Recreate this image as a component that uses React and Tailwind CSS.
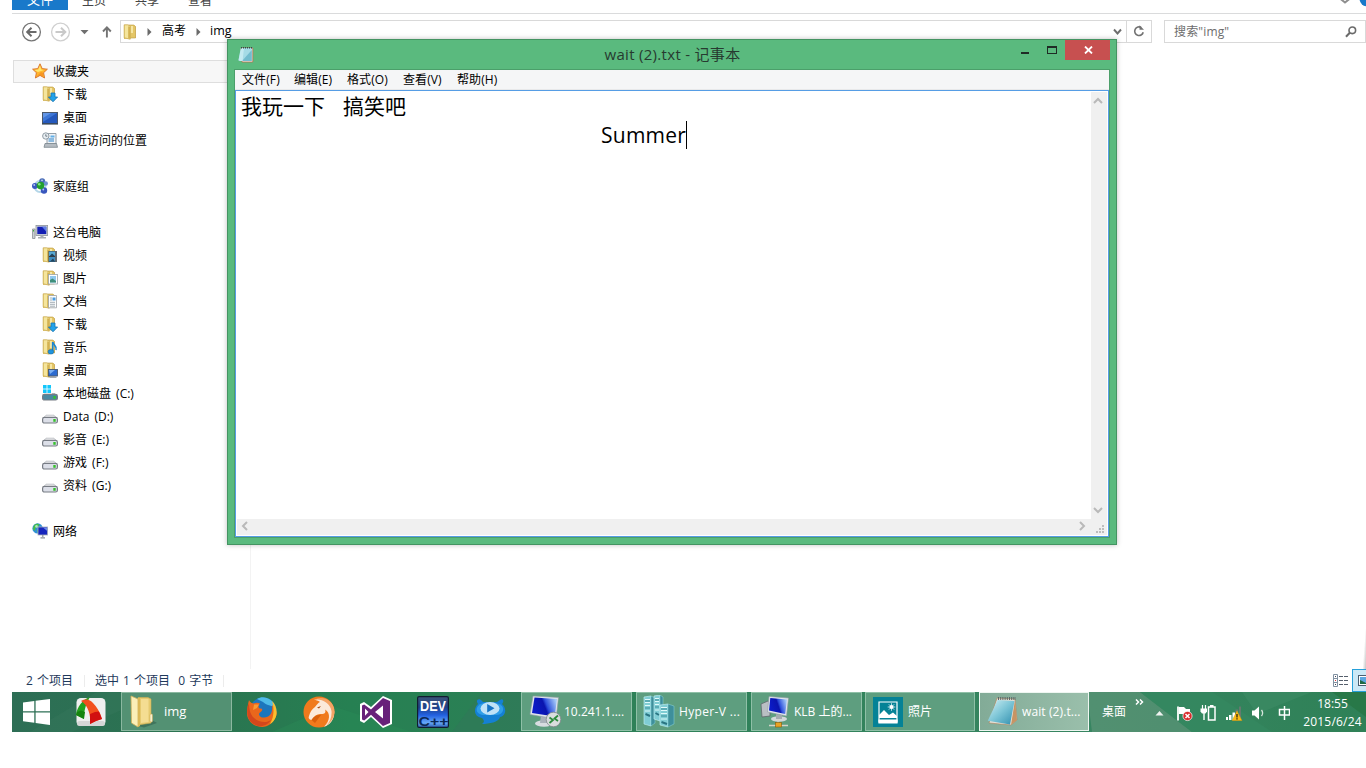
import React from "react";

/* ---------- small icons (16px) ---------- */
const Folder16 = ({ children }) => (
  <svg width="16" height="16" viewBox="0 0 16 16" className="shrink-0">
    <path d="M1 1 H11 L12.5 2.5 V14 H6 L1 15Z" fill="#dcbc58" />
    <path d="M5.5 1 H10.5 L12.5 2.5 V14 H5.5Z" fill="#e4c666" stroke="#bd9a42" strokeWidth=".6" />
    <path d="M7.5 2 H10 V9 H7.5Z" fill="#f6e6a4" />
    <path d="M1.2 .8 H4.8 L7.2 2 V15.2 L1.2 13.8Z" fill="#f5e59c" stroke="#c9a950" strokeWidth=".8" />
    <path d="M5.2 2.2 L7.3 3 V15 L5.2 14.4Z" fill="#d4b251" />
    {children}
  </svg>
);
const DownFolder = () => (
  <Folder16>
    <path d="M9 7 H13 V11 H15.6 L11 15.8 L6.4 11 H9Z" fill="#22a2ea" stroke="#1474b4" strokeWidth=".8" />
  </Folder16>
);
const VideoFolder = () => (
  <Folder16>
    <rect x="6.5" y="4" width="8.5" height="11" fill="#333e48" />
    <rect x="7" y="4.5" width="6" height="4.5" fill="#58aad5" />
    <rect x="7" y="10" width="6" height="4.5" fill="#3f8dc0" />
    <path d="M7.5 9 L10 6.5 L13 9Z M8 14.5 L11 11.5 L13 14.5Z" fill="#20455f" />
    <path d="M14 4.5 V15" stroke="#dfe5e8" strokeDasharray="1 1" />
  </Folder16>
);
const PicFolder = () => (
  <Folder16>
    <rect x="6.5" y="4.5" width="9" height="9.5" fill="#fff" stroke="#9aa3aa" strokeWidth=".8" />
    <rect x="8" y="6" width="6" height="6.5" fill="#8fc8ee" />
    <path d="M8 12.5 V10 L10.5 8.5 L14 11 V12.5Z" fill="#3f8f7a" />
  </Folder16>
);
const DocFolder = () => (
  <Folder16>
    <path d="M6.5 2.5 H14.5 V14.8 H6.5Z" fill="#fcfdfd" stroke="#9aa0a5" strokeWidth=".8" />
    <path d="M8 5 H10 M8 7 H10 M8 9.3 H13 M8 11.3 H13 M8 13.2 H13" stroke="#8d99a2" strokeWidth=".8" />
    <rect x="10.5" y="4.5" width="3" height="3" fill="#4a9be0" />
  </Folder16>
);
const MusicFolder = () => (
  <Folder16>
    <path d="M10.7 3 C11 6 15.2 6.5 14 11" fill="none" stroke="#1a86cf" strokeWidth="1.6" />
    <path d="M10.7 3 V12.6" stroke="#1a86cf" strokeWidth="1.6" />
    <ellipse cx="8.9" cy="12.8" rx="2.8" ry="2.3" fill="#2094dd" stroke="#12639c" strokeWidth=".5" />
  </Folder16>
);
const DeskFolder = () => (
  <Folder16>
    <rect x="6.5" y="7.5" width="9" height="6.5" fill="#2c6bd0" stroke="#4b5a70" strokeWidth=".9" />
    <path d="M7 8 H13 L8 12Z" fill="#7db1f2" />
    <path d="M7.5 15.2 H14.5" stroke="#7b858d" />
  </Folder16>
);
const Star = () => (
  <svg width="16" height="16" viewBox="0 0 16 16" className="shrink-0">
    <path d="M8 .8 L10.2 5.6 L15.4 6.2 L11.6 9.7 L12.6 15 L8 12.4 L3.4 15 L4.4 9.7 L.6 6.2 L5.8 5.6Z" fill="#ffb52c" stroke="#d8702a" strokeWidth=".9" />
    <path d="M8 2.6 L9.2 6.4 L12 7 L6 9 L2.4 6.9 L6.2 6.4Z" fill="#ffe66e" />
    <path d="M11 14 L8 12 L5 13 L9 9 L11 10Z" fill="#f58a1e" opacity=".7" />
  </svg>
);
const Desk = () => (
  <svg width="16" height="16" viewBox="0 0 16 16" className="shrink-0">
    <rect x=".5" y="3.5" width="15" height="11" fill="#2458bc" stroke="#4a576a" />
    <path d="M1 4 H15 L1 13Z" fill="#3d76d6" />
    <path d="M1 4 H9 L1 9Z" fill="#6b9eea" opacity=".8" />
    <path d="M0 14.8 H16" stroke="#3b4a5c" strokeWidth="1.6" />
  </svg>
);
const Recent = () => (
  <svg width="16" height="16" viewBox="0 0 16 16" className="shrink-0">
    <path d="M5 1.5 H14 V12 H5Z" fill="#f0f3f6" stroke="#8a959e" strokeWidth=".9" />
    <path d="M6.5 7 H12 M6.5 9 H12" stroke="#2d83c9" />
    <rect x="8.5" y="3.5" width="4" height="2" fill="#62b0e8" />
    <path d="M3 11.5 H14.5 L15.5 15.3 H2Z" fill="#b5bcc2" stroke="#7a858d" strokeWidth=".8" />
    <circle cx="3.8" cy="4" r="3.2" fill="#e8eef2" stroke="#87939c" strokeWidth=".9" />
    <path d="M3.8 2.3 V4.2 H5.3" stroke="#55656f" strokeWidth=".8" fill="none" />
  </svg>
);
const HomeGroup = () => (
  <svg width="16" height="16" viewBox="0 0 16 16" className="shrink-0">
    <circle cx="8" cy="8.5" r="5.5" fill="none" stroke="#b4d6e8" strokeWidth="2" />
    <circle cx="2.9" cy="8" r="2.9" fill="#3a59c0" />
    <circle cx="10.2" cy="3.2" r="3" fill="#4a6db8" />
    <circle cx="13.8" cy="5.5" r="2.2" fill="#6f92cf" />
    <circle cx="12" cy="12.5" r="3.2" fill="#3856bd" />
    <circle cx="8.5" cy="7.6" r="3.8" fill="#22a02c" />
    <circle cx="7.3" cy="6.3" r="1.3" fill="#8be38c" />
    <circle cx="2.2" cy="7" r=".9" fill="#b7c6f1" />
    <circle cx="11.3" cy="11.5" r=".9" fill="#b7c6f1" />
    <circle cx="10" cy="2.4" r=".8" fill="#cddff2" />
  </svg>
);
const PC = () => (
  <svg width="16" height="16" viewBox="0 0 16 16" className="shrink-0">
    <path d="M.5 5 H3 V14.5 H.5Z" fill="#c9ced2" stroke="#8a9096" strokeWidth=".8" />
    <rect x="1" y="6" width="1" height="1.5" fill="#3fae3a" />
    <rect x="4" y="1.5" width="11.7" height="10" fill="#d4d8db" stroke="#8b9298" strokeWidth=".8" />
    <rect x="5.3" y="2.7" width="9" height="7.4" fill="#1420b4" />
    <path d="M10 2.7 H14.3 V7.7Z" fill="#5f7fe6" />
    <path d="M8.5 11.5 H11.5 V13 H14 V14.6 H6 V13 H8.5Z" fill="#a9afb4" />
  </svg>
);
const Drive = ({ win }) => (
  <svg width="16" height="16" viewBox="0 0 16 16" className="shrink-0">
    {win ? (
      <g>
        <g fill="#12c6fb">
          <rect x="1" y="0" width="3.6" height="3.6" />
          <rect x="5.4" y="0" width="3.6" height="3.6" />
          <rect x="1" y="4.4" width="3.6" height="3.6" />
          <rect x="5.4" y="4.4" width="3.6" height="3.6" />
        </g>
        <path d="M10 8.5 H13" stroke="#b6bbc0" />
      </g>
    ) : (
      <path d="M1.5 10 L4 7.2 H12 L14.5 10Z" fill="#f4f5f6" stroke="#b4b8bd" strokeWidth=".8" />
    )}
    <rect x=".6" y="9.4" width="14.8" height="5.6" rx="1.8" fill={win ? "#4b88a0" : "#dcdfe8"} stroke="#777c84" strokeWidth="1.2" />
    <rect x="11.3" y="11" width="2.4" height="2.8" fill="#35c12c" />
  </svg>
);
const Net = () => (
  <svg width="16" height="16" viewBox="0 0 16 16" className="shrink-0">
    <circle cx="5.6" cy="5.4" r="5.2" fill="#2f8fd6" />
    <path d="M2 2.3 C4 .6 6 .4 7.5 1.3 L6 4 L3.5 5 L3 8 L.8 6Z M5 7 L8 8 L6 10.3Z" fill="#45bd4b" />
    <circle cx="4.5" cy="3.4" r="1.3" fill="#c9f0d8" opacity=".8" />
    <rect x="6" y="4" width="9.6" height="8" fill="#1726bd" stroke="#aab1b8" strokeWidth=".8" />
    <path d="M11 4.4 H15.2 V8Z" fill="#6c8bea" />
    <path d="M10.8 12 V14 M8.5 14.8 H13" stroke="#8b9298" strokeWidth="1.2" />
  </svg>
);
const NotepadSmall = () => (
  <svg width="16" height="17" viewBox="0 0 16 17">
    <path d="M3 2 L14.8 2 V16 H4Z" fill="#f2efe9" stroke="#b2714f" strokeWidth=".8" />
    <path d="M2.8 2 H13.8 V15 H2 L.4 14.4Z" fill="#a5dbe6" />
    <path d="M13.8 4 V15 H4Z" fill="#62b2c6" opacity=".75" />
    <path d="M3 2 H6 L4.6 15 H2 L.6 14Z" fill="#cdeef4" opacity=".8" />
    <path d="M3 1.7 H14" stroke="#33474d" strokeWidth="1.6" strokeDasharray="1 1" />
  </svg>
);

/* ---------- task bar icons ---------- */
const Firefox = () => (
  <svg width="32" height="32" viewBox="0 0 32 32">
    <circle cx="17" cy="15" r="13.5" fill="#1d76bd" />
    <path d="M11 3 C17 -1 27 2 29 11 C26 10 20 9 17 6Z" fill="#4fbbe8" />
    <path d="M3 4 C4 6.5 6 7.5 8 7.5 C10 6.5 12 6.5 14 7.5 C12 9.5 12 11.5 14 12.5 C17 12.5 17 14.5 14 16.5 C12 17.5 13 21 17 21.5 C24 22 27 17 26 9 C30 13 31 16 30.5 19 C28 27 22 31 16 31 C8 31 1 25 1 17 C1 12 2 8 3 4Z" fill="#e9671c" />
    <path d="M26 5 C32.5 11 32.5 23 24 28 C28 21 28.5 13 26 5Z" fill="#fbc02e" />
    <path d="M3 7 C3 15 5 22 13 25 C18 27 22 26 25 24 C22 29 16 31 12 30 C5 28 1.5 23 1.3 17 C1 12 2 9 3 7Z" fill="#d4471c" />
    <path d="M8 8.5 L13 8.5 L11 12 L7 14Z" fill="#f79a34" />
  </svg>
);
const Cheetah = () => (
  <svg width="32" height="32" viewBox="0 0 32 32">
    <circle cx="16" cy="16" r="15.5" fill="#f07a1d" />
    <path d="M11 4 C20 .5 30 4 31.3 16 C31 24 27 29 21 30.8 C27 25 28 17 22 13.5 C23.5 17 21 18.5 17 18 C14 18 11 20 8.5 24 C6 23.5 5 22 6 20 C7 16 9 13 12 11 C14 8.5 15 7 17 6 C15 4.5 13 4 11 4Z" fill="#fbe9da" />
    <path d="M11 4 C17 2 27 6 28.5 15 C29 21 27 26 23 29.5 C32 24 34 13 28 6.5 C23 1 16 1 11 4Z" fill="#f5a365" />
    <path d="M14 11.5 L18 10 L16 12.5Z" fill="#a64b13" />
    <path d="M8.5 24 C11 20 14 18.5 18 19 L12 27Z" fill="#d95f0c" />
  </svg>
);
const VS = () => (
  <svg width="32" height="32" viewBox="0 0 32 32">
    <path d="M23 0 L32 4 V28 L23 32 L11 21 L4 27 L0 25 V8 L4 6 L11 11Z" fill="#fff" />
    <path d="M23 2 L30 5 V27 L23 30 L11 18.8 L4.2 24.5 L2 23.5 V9.5 L4.2 8.5 L11 13.5Z" fill="#68217a" />
    <path d="M5 12.5 L8.5 16 L5 19.8Z M23 9.5 V22.5 L15 16Z" fill="#fff" />
  </svg>
);
const DevCpp = () => (
  <svg width="32" height="32" viewBox="0 0 32 32">
    <defs>
      <linearGradient id="dev" x1="0" y1="0" x2="0" y2="1">
        <stop offset="0" stopColor="#3c5478" />
        <stop offset=".35" stopColor="#1f4288" />
        <stop offset=".6" stopColor="#2260e0" />
        <stop offset=".85" stopColor="#65a8f8" />
        <stop offset="1" stopColor="#2b5db0" />
      </linearGradient>
    </defs>
    <rect x=".6" y=".6" width="30.8" height="30.8" rx="1.5" fill="url(#dev)" stroke="#101c30" strokeWidth="1.2" />
    <text x="16" y="15" textAnchor="middle" textLength="26" lengthAdjust="spacingAndGlyphs" fontFamily="Liberation Sans, sans-serif" fontWeight="700" fontSize="14" fill="#fff">DEV</text>
    <text x="16.5" y="29.5" textAnchor="middle" textLength="30" lengthAdjust="spacingAndGlyphs" fontFamily="Liberation Sans, sans-serif" fontWeight="700" fontSize="12.5" fill="#0b2856">C++</text>
  </svg>
);
const Player = () => (
  <svg width="32" height="32" viewBox="0 0 32 32">
    <path d="M4 8 C1 4 5 2 7 4 L9 6 H23 L26 4 C28 2 31 4 28 8 C33 12 32 20 26 21 C25 26 15 28 8 28 C11 26 10 24 8 22 C0 21 -1 13 4 8Z" fill="#1480d4" />
    <path d="M4 10 C9 5 22 5 28 10 C31 14 28 19 22 19 H9 C3 18 1 14 4 10Z" fill="#2f9ee8" />
    <ellipse cx="16" cy="12.5" rx="9.5" ry="6.5" fill="#bfe2f7" />
    <path d="M13.2 8 L20.5 12.3 L13.2 16.5Z" fill="#1574c4" />
  </svg>
);
const Monitor = ({ remote }) => (
  <svg width="33" height="33" viewBox="0 0 33 33" className="shrink-0">
    <defs>
      <linearGradient id={remote ? "scrA" : "scrB"} x1="0" y1=".6" x2="1" y2=".3">
        <stop offset="0" stopColor="#0b1ccc" />
        <stop offset=".5" stopColor="#0a14ae" />
        <stop offset=".6" stopColor="#2d4fdc" />
        <stop offset="1" stopColor="#a8cdf8" />
      </linearGradient>
    </defs>
    {remote ? (
      <g>
        <ellipse cx="15" cy="28.5" rx="9" ry="3.3" fill="#d8dce0" />
        <path d="M12 20 L19 22 L18 28 H11Z" fill="#aab2ba" />
        <path d="M4 1 L29.5 2.5 L27 24 L1 19.5Z" fill="#dfe5ea" stroke="#8e9aa5" strokeWidth=".6" />
        <path d="M5.5 2.5 L28 4 L25.7 21.5 L3 18Z" fill="url(#scrA)" />
        <circle cx="24.5" cy="24.5" r="7.3" fill="#d9dddd" stroke="#7f8789" strokeWidth=".8" />
        <path d="M20.5 22.5 L24 25 L20.5 28 M29 20.5 L25.5 23.5 L29 26" fill="none" stroke="#2b8a3c" strokeWidth="1.8" />
      </g>
    ) : (
      <g>
        <path d="M1 9 L8 6 L10 7 V21 L2 22Z" fill="#b9bfc3" stroke="#5f676c" strokeWidth=".8" />
        <ellipse cx="19" cy="24" rx="8" ry="2.7" fill="#d3d7da" />
        <path d="M16 19 L22 20 V24 H16Z" fill="#a4abb0" />
        <path d="M9 1.5 L28.5 3 L26.5 21 L7.5 17Z" fill="#dfe5ea" stroke="#8e9aa5" strokeWidth=".6" />
        <path d="M10.3 3 L27 4.4 L25.2 19 L9 15.5Z" fill="url(#scrB)" />
        <path d="M18 24 V28 M9 30.5 H28" stroke="#d4d4c8" strokeWidth="1.3" />
        <rect x="15.5" y="27.5" width="6" height="4.5" fill="#e8a222" stroke="#8a5a0a" strokeWidth=".6" />
      </g>
    )}
  </svg>
);
const HyperV = () => (
  <svg width="32" height="33" viewBox="0 0 32 33" className="shrink-0">
    {[[1, 1, 30, 7, 4], [11, 0, 26, 6, 3], [17, 9, 23, 8, 6]].map(([x, y, h, a, b]) => (
      <g key={x}>
        <path d={`M${x} ${y + 1} L${x + a} ${y} L${x + a} ${y + h} L${x} ${y + h - 2}Z`} fill="#7fcdd4" stroke="#b9eaec" strokeWidth=".7" />
        <path d={`M${x + a} ${y} L${x + a + b} ${y + 2} V${y + h - 3} L${x + a} ${y + h}Z`} fill="#3e8f9b" stroke="#8fd7dc" strokeWidth=".5" />
        <path d={`M${x + 1} ${y + 3.5} H${x + a - 1} M${x + 1} ${y + 6.5} H${x + a - 1} M${x + 1} ${y + 9.5} H${x + a - 1} M${x + 1} ${y + 15} H${x + a - 1}`} stroke="#dffafa" strokeWidth="1" />
        <path d={`M${x + 1} ${y + 5} H${x + a - 1} M${x + 1} ${y + 12} H${x + a - 1}`} stroke="#3b8d98" strokeWidth="1" />
        <path d={`M${x + 1.5} ${y + 18} L${x + a - 1} ${y + 20}`} stroke="#2a7482" strokeWidth="2" />
      </g>
    ))}
  </svg>
);
const Photos = () => (
  <svg width="30" height="30" viewBox="0 0 30 30" className="shrink-0">
    <rect width="30" height="30" fill="#058296" />
    <path d="M6 5 H24 V25 H6Z" fill="#058296" stroke="#fff" strokeWidth="1.2" />
    <path d="M6 21 V18 L11 13 L16 18 L20 15.5 L24 19 V21Z" fill="#fff" />
    <circle cx="18.5" cy="10" r="2" fill="#fff" />
    <path d="M18.5 6.2 V13.8 M14.7 10 H22.3 M15.8 7.3 L21.2 12.7 M21.2 7.3 L15.8 12.7" stroke="#fff" strokeWidth=".7" />
    <rect x="5.4" y="22.5" width="19.2" height="4" fill="#fff" />
  </svg>
);
const NotepadBig = () => (
  <svg width="32" height="32" viewBox="0 0 32 32" className="shrink-0">
    <path d="M10 2 L28 3 L30 24 L24 29 L2 27Z" fill="#e5e0d5" stroke="#a9825c" strokeWidth=".6" />
    <path d="M28 4 L30 24 L24 29Z" fill="#c79463" />
    <defs>
      <linearGradient id="pad" x1="0" y1="0" x2="1" y2="1">
        <stop offset="0" stopColor="#d4f1f5" />
        <stop offset=".5" stopColor="#7cc5d6" />
        <stop offset="1" stopColor="#2f8eae" />
      </linearGradient>
    </defs>
    <path d="M10.5 4 L27.5 5 L23 28.5 L.8 24.8Z" fill="url(#pad)" />
    <path d="M11 2.5 H29" stroke="#5b6668" strokeWidth="3" strokeDasharray="1 1.2" />
  </svg>
);
const FolderBig = () => (
  <svg width="30" height="33" viewBox="0 0 30 33" className="shrink-0">
    <path d="M20 24 L27 28 L14 32.5 L8 31Z" fill="#24493a" opacity=".4" />
    <path d="M8 2.5 H18 L21 4 V28 L8 30Z" fill="#e6ca70" stroke="#cfae52" strokeWidth=".6" />
    <path d="M11 4 H18.5 V27 L11 28Z" fill="#f4dd92" />
    <path d="M1 1 L8 4 V32 L1.5 28Z" fill="#fbefb8" stroke="#d2b15a" strokeWidth=".8" />
    <path d="M8 4 L10 3 V31 L8 32Z" fill="#dcb957" />
    <rect x="20" y="19" width="2.5" height="8" rx="1" fill="#f6f0cf" stroke="#c9a74e" strokeWidth=".5" />
  </svg>
);
const Umbrella = () => (
  <svg width="30" height="30" viewBox="0 0 30 30">
    <rect x=".5" y="1" width="29" height="28" rx="4.5" fill="#efefef" />
    <rect x="1" y="24" width="28" height="5" rx="2.5" fill="#d5d6d6" />
    <path d="M14 0 C7 2 1 10 0 18 L4 20 L8 22 C8 15 9 8 14 0Z" fill="#23a11f" />
    <path d="M1 15 L5 13.5 L9 15 L8 22 L4 20 L0 18Z" fill="#15840f" />
    <path d="M5 4 C10 1.5 14 2.5 17 6 C21 10 24 15 26 22 L20 24 L14 27 C15 18 12 8 5 4Z" fill="#f2501d" />
    <path d="M14 17 L19 15 L23 14.5 L26 22 L20 24 L14 27Z" fill="#d11010" />
  </svg>
);

/* ---------- data ---------- */
const NAV = [
  ["收藏夹", Star, 0], ["下载", DownFolder, 1], ["桌面", Desk, 1], ["最近访问的位置", Recent, 1], null,
  ["家庭组", HomeGroup, 0], null,
  ["这台电脑", PC, 0], ["视频", VideoFolder, 1], ["图片", PicFolder, 1], ["文档", DocFolder, 1],
  ["下载", DownFolder, 1], ["音乐", MusicFolder, 1], ["桌面", DeskFolder, 1],
  ["本地磁盘 (C:)", () => <Drive win />, 1], ["Data (D:)", Drive, 1], ["影音 (E:)", Drive, 1],
  ["游戏 (F:)", Drive, 1], ["资料 (G:)", Drive, 1], null, ["网络", Net, 0],
];

const TABS = ["主页", "共享", "查看"];

const Crumb = () => (
  <svg width="5" height="8" viewBox="0 0 5 8" className="shrink-0"><path d="M.5 0 L4.5 4 L.5 8Z" fill="#6a6a6a" /></svg>
);

function Explorer() {
  return (
    <div className="flex h-[692px] flex-col pl-3">
      <div className="flex h-[14px] shrink-0 justify-between overflow-hidden border-b border-[#dadbdc] text-[12px] text-[#444]">
        <div className="flex h-[10px]">
          <div className="flex h-[10px] w-14 items-end justify-center bg-[#1979ca] text-[13px] text-white"><span className="h-[21px] leading-[20px]">文件</span></div>
          {TABS.map((t) => (
            <div key={t} className="flex h-[10px] w-[53px] items-end justify-center pr-px"><span className="h-[19px] leading-[20px]">{t}</span></div>
          ))}
        </div>
        <svg width="30" height="10" viewBox="0 0 30 10">
          <path d="M4 -1.5 L9 2.5 L14 -1.5" fill="none" stroke="#8e8e8e" strokeWidth="2" />
          <circle cx="31.5" cy="-1.5" r="8" fill="#1979ca" />
        </svg>
      </div>
      <div className="mt-[6px] flex h-[23px] shrink-0 items-center">
        <svg width="108" height="23" viewBox="0 0 108 23" className="shrink-0" fill="none">
          <circle cx="19.5" cy="12" r="8.9" stroke="#757575" strokeWidth="1.3" />
          <path d="M24.5 12 H15.5 M19.5 7.8 L15.2 12 L19.5 16.2" stroke="#6a6a6a" strokeWidth="2" />
          <circle cx="48.5" cy="12" r="8.9" stroke="#cfcfcf" strokeWidth="1.3" />
          <path d="M43.5 12 H53 M49 7.8 L53.3 12 L49 16.2" stroke="#c9c9c9" strokeWidth="2" />
          <path d="M68.5 10 H76.5 L72.5 14.2Z" fill="#6f6f6f" />
          <path d="M94.9 17.5 V8 M91 11.5 L94.9 7.3 L98.8 11.5" stroke="#747474" strokeWidth="1.9" />
        </svg>
        <div className="flex h-[23px] w-[1032px] items-center border border-[#d9d9d9]">
          <div className="flex h-full w-[1005px] items-center pl-[2px] text-[12px] text-black">
            <Folder16 />
            <span className="ml-[8px]"><Crumb /></span>
            <span className="mb-px ml-[10px] w-[25px]">高考</span>
            <span className="ml-[9px]"><Crumb /></span>
            <span className="mb-px ml-[9px] text-[12.5px]">img</span>
            <svg className="mr-[4px] ml-auto" width="9" height="8" viewBox="0 0 9 8"><path d="M1 1.5 L4.5 5.5 L8 1.5" fill="none" stroke="#6d6d6d" strokeWidth="1.9" /></svg>
          </div>
          <div className="flex h-full flex-1 items-center justify-center border-l border-[#d9d9d9]">
            <svg width="12" height="13" viewBox="0 0 12 13" fill="none"><path d="M8.3 2.6 A4.3 4.3 0 1 0 10.2 7.2" stroke="#727272" strokeWidth="1.6" /><path d="M5.5 0 V4.6 H10Z" transform="translate(1 .2)" fill="#727272" /></svg>
          </div>
        </div>
        <div className="ml-3 flex h-[23px] w-[202px] items-center justify-between border border-[#d9d9d9] pr-2 pl-[9px] text-[12px] text-[#6d6d6d]">
          <span className="tracking-[.15px]">搜索"img"</span>
          <svg width="12" height="12" viewBox="0 0 12 12" fill="none"><circle cx="7.3" cy="4.3" r="3.3" stroke="#6a6a6a" strokeWidth="1.6" /><path d="M4.8 6.8 L1 10.8" stroke="#6a6a6a" strokeWidth="2" /></svg>
        </div>
      </div>
      <div className="mt-[17px] flex flex-1">
        <div className="w-[239px] border-r border-[#f3f3f3]">
          {NAV.map((item, i) => {
            if (!item) return <div key={i} className="h-[23px]" />;
            const [label, Icon, depth] = item;
            return (
              <div key={i} className={"flex h-[23px] items-center text-[12px] text-black " + (i === 0 ? "ml-px border border-[#dedede] bg-[#f7f7f7] pl-[18px]" : depth ? "pl-[30px]" : "pl-5")}>
                <span className="pb-px"><Icon /></span>
                <span className="ml-[5px] leading-[22px] whitespace-pre [word-spacing:2px]">{label}</span>
              </div>
            );
          })}
        </div>
        <div className="flex flex-1 items-end justify-end">
          <div className="h-10 w-[3px] bg-linear-to-br from-white from-40% to-[#c4c4c4]" />
        </div>
      </div>
      <div className="flex h-[23px] shrink-0 items-center text-[12px] text-[#1e395b]">
        <span className="ml-[14px] w-[58px] pt-px whitespace-pre [word-spacing:1px]">2 个项目</span>
        <span className="h-3 w-px bg-[#ececec]" />
        <span className="ml-[10px] w-[128px] pt-px whitespace-pre [word-spacing:1px]">选中 1 个项目  0 字节</span>
        <span className="h-3 w-px bg-[#ececec]" />
        <svg className="ml-auto" width="16" height="13" viewBox="0 0 16 13" fill="none">
          <path d="M.5 .5 H4.5 V12.5 H.5Z M.5 4.5 H4.5 M.5 8.5 H4.5" stroke="#8292a2" />
          <path d="M2 2.5 H3 M2 10.5 H3" stroke="#445" /><path d="M2 6.5 H3" stroke="#d33" />
          <path d="M6 2.5 H10 M11 2.5 H15 M6 6.5 H10 M11 6.5 H15 M6 10.5 H10 M11 10.5 H15" stroke="#555f6b" />
        </svg>
        <div className="ml-[3px] flex h-[23px] w-[14px] items-center overflow-hidden border border-r-0 border-[#26a0da] bg-[#cbe8f6] pl-[5px]">
          <svg width="12" height="11" viewBox="0 0 12 11" className="shrink-0"><rect x=".5" y=".5" width="14" height="10" fill="#fff" stroke="#4a5d70" /><rect x="2" y="2" width="10" height="7" fill="#5ca6e0" /><path d="M2 9 V5 L8 8 V9Z" fill="#1f6a44" /></svg>
        </div>
      </div>
    </div>
  );
}

const MENU = [["文件(F)", "w-[52px]"], ["编辑(E)", "w-[53px]"], ["格式(O)", "w-[56px]"], ["查看(V)", "w-[54px]"], ["帮助(H)", "w-[60px]"]];

function Chevron({ d }) {
  return <svg width="10" height="10" viewBox="0 0 10 10"><path d={d} fill="none" stroke="#b9b9b9" strokeWidth="2" /></svg>;
}

function Notepad() {
  return (
    <div className="absolute top-[39px] left-[227px] flex h-[506px] w-[890px] flex-col border border-[#449462] bg-[#5aba7e] px-[6px] pb-[6px] shadow-[0_0_5px_rgba(0,0,0,0.25)]">
      <div className="flex h-[29px] shrink-0 items-start">
        <div className="w-[135px] pt-[6px] pl-1"><NotepadSmall /></div>
        <div className="flex-1 pr-[44px] text-center text-[15px] leading-[29px] tracking-[.3px] text-[#273a30]">wait (2).txt - 记事本</div>
        <svg width="45" height="20" viewBox="0 0 45 20"><path d="M1 13 H9" stroke="#1f2b25" strokeWidth="2" /><path d="M27.5 6 V14 M36.5 6 V14 M27 13.5 H37" stroke="#1f2b25" /><path d="M27 7 H37" stroke="#1f2b25" strokeWidth="2" /></svg>
        <div className="flex h-5 w-[45px] items-center justify-center bg-[#c75050] pl-px">
          <svg width="9" height="8" viewBox="0 0 9 8"><path d="M1 .5 L8 7.5 M8 .5 L1 7.5" stroke="#fff" strokeWidth="1.8" /></svg>
        </div>
      </div>
      <div className="flex flex-1 flex-col border border-[#4b9f6a]">
        <div className="flex h-5 shrink-0 items-center border-b border-[#e8e9ea] bg-[#f5f6f7] pl-[7px] text-[12px] text-black">
          {MENU.map(([m, w]) => <span key={m} className={"leading-[19px] tracking-[.1px] " + w}>{m}</span>)}
        </div>
        <div className="flex flex-1 flex-col border border-[#569de5] bg-white p-px">
          <div className="flex flex-1">
            <div className="flex-1 pt-px pl-1 text-[21px] leading-[28px] text-black">
              <div className="flex h-7"><span className="w-[102px] leading-[27px]">我玩一下</span><span className="leading-[27px]">搞笑吧</span></div>
              <div className="flex h-7 pl-[360px]"><span className="w-[85px] tracking-[.25px]">Summer</span><span className="h-7 w-px bg-black" /></div>
            </div>
            <div className="flex w-4 flex-col items-center justify-between bg-[#f0f0f0] pt-1 pr-[2px] pb-1">
              <Chevron d="M1 7 L5 3 L9 7" /><Chevron d="M1 3 L5 7 L9 3" />
            </div>
          </div>
          <div className="flex h-4 shrink-0 items-center bg-[#f0f0f0] pb-[2px] pl-[3px]">
            <Chevron d="M7 1 L3 5 L7 9" />
            <span className="ml-auto"><Chevron d="M3 1 L7 5 L3 9" /></span>
            <svg width="16" height="16" viewBox="0 0 16 16" className="ml-1" fill="#bdbdbd">
              <path d="M11 7h2v2h-2z M8 10h2v2h-2z M11 10h2v2h-2z M5 13h2v2h-2z M8 13h2v2h-2z M11 13h2v2h-2z" />
            </svg>
          </div>
        </div>
      </div>
    </div>
  );
}

const RUNNING = [
  ["10.241.1....", () => <Monitor remote />, "w-[111px] mr-1", "pl-[7px] gap-[2px]"],
  ["Hyper-V ...", HyperV, "w-[111px] mr-1 tracking-[.35px]", "pl-[6px] gap-1"],
  ["KLB 上的...", () => <Monitor />, "w-[111px] mr-[3px]", "pl-2 gap-[1px]"],
  ["照片", Photos, "w-[110px] mr-1", "pl-[7px] gap-[5px]"],
];

function Taskbar() {
  return (
    <div className="ml-3 grid h-10 grid-cols-1 grid-rows-1 overflow-hidden">
      <svg width="1354" height="40" viewBox="0 0 1354 40" className="col-start-1 row-start-1">
        <defs>
          <linearGradient id="bar" x1="0" y1="0" x2="1" y2="0">
            <stop offset="0" stopColor="#2d6e55" /><stop offset=".15" stopColor="#2a7450" />
            <stop offset=".25" stopColor="#268052" /><stop offset=".38" stopColor="#2c8056" />
            <stop offset=".8" stopColor="#378561" /><stop offset="1" stopColor="#2f8157" />
          </linearGradient>
        </defs>
        <rect width="1354" height="40" fill="url(#bar)" />
        <path d="M18 40 L85 0 H150 L60 40Z" fill="#3b7a60" opacity=".3" />
        <path d="M260 40 L320 14 L400 40Z" fill="#2b8b58" opacity=".4" />
        <path d="M440 40 L470 0 H520 V40Z" fill="#31765a" opacity=".5" />
        <path d="M1075 0 H1128 L1180 40 H1080Z" fill="#5c9478" opacity=".7" />
        <path d="M1128 0 L1180 40 H1260 L1200 0Z" fill="#348860" opacity=".8" />
        <path d="M1230 0 H1300 L1245 22Z" fill="#44906c" opacity=".4" />
        <path d="M1320 0 H1354 V25Z" fill="#287848" />
      </svg>
      <div className="col-start-1 row-start-1 flex h-10 items-center text-[13px] text-white">
        <div className="flex w-[49px] justify-center">
          <svg width="28" height="26" viewBox="0 0 28 26" fill="#fff"><path d="M0 3.6 L11.3 2 V12.2 H0Z M12.6 1.8 L27 0 V12.2 H12.6Z M0 13.4 H11.3 V23.8 L0 22.2Z M12.6 13.4 H27 V26 L12.6 24Z" /></svg>
        </div>
        <div className="flex w-[60px] justify-center pr-px"><Umbrella /></div>
        <div className="flex h-[39px] w-[111px] items-center self-start border border-[#8bb8a0] bg-[#539173] pl-2">
          <FolderBig /><span className="ml-[4px]">img</span>
        </div>
        <div className="ml-px flex w-[285px]">
          {[Firefox, Cheetah, VS, DevCpp, Player].map((I, i) => <div key={i} className="flex w-[57px] justify-center pb-px pl-px"><I /></div>)}
        </div>
        <div className="ml-[3px] flex h-[39px] self-start">
          {RUNNING.map(([label, Icon, w, pad]) => (
            <div key={label} className={"flex h-[39px] items-center border border-[#8fc0a7] bg-[#5e9e7f] text-[12px] whitespace-nowrap " + w + " " + pad}>
              <Icon /><span>{label}</span>
            </div>
          ))}
          <div className="flex h-[39px] w-[110px] items-center gap-[3px] border border-[#eef6f1] bg-linear-to-r from-[#82ab97] to-[#9abfab] pl-[7px] text-[12px] whitespace-nowrap">
            <NotepadBig /><span className="tracking-[.1px]">wait (2).t...</span>
          </div>
        </div>
        <div className="ml-[13px] flex w-[42px] items-center justify-between text-[12px]">
          <span>桌面</span>
          <svg width="9" height="7" viewBox="0 0 9 7" fill="none" className="mb-[19px]"><path d="M1 .5 L3.5 3 L1 5.5 M5 .5 L7.5 3 L5 5.5" stroke="#fff" strokeWidth="1.5" /></svg>
        </div>
        <svg width="146" height="40" viewBox="-2 0 146 40" className="shrink-0">
          <path d="M9.500 23.5 L13.5 19 L17.5 23.5Z" fill="#eef3f0" />
          <path d="M32 14.500 V28.5" stroke="#fff" strokeWidth="1.8" />
          <path d="M33 15 H38 L40 17 H44 V24 H39 L37 22 H33Z" fill="#fff" />
          <circle cx="41.5" cy="24" r="4.6" fill="#d92a2a" stroke="#fff" strokeWidth=".7" />
          <path d="M39.5 22 L43.5 26 M43.5 22 L39.5 26" stroke="#fff" strokeWidth="1.5" />
          <rect x="62.5" y="15" width="6.5" height="13" fill="none" stroke="#fff" strokeWidth="1.5" />
          <rect x="64" y="13" width="3.5" height="2" fill="#fff" />
          <path d="M56.500 13 V17 M59.5 13 V17" stroke="#fff" strokeWidth="1.2" />
          <path d="M54.5 16.5 H61 V19.5 L59.5 21.5 H56 L54.5 19.5Z" fill="#fff" /><path d="M58 21 V28" stroke="#fff" strokeWidth="1.4" />
          <path d="M80 25h2v3h-2z M83 23h2.500v5h-2.500z M86.500 20.500h2.500v7.500h-2.500z" fill="#fff" />
          <path d="M89.500 17.500h2.500v10h-2.500z M93 14.500h2v13h-2z" fill="#65796f" />
          <path d="M91 19 L95.8 28.5 H86.2Z" fill="#fbbd16" stroke="#e39c0a" strokeWidth=".5" />
          <path d="M91 22 V25.5 M91 26.2 V27.5" stroke="#2c2410" strokeWidth="1.3" />
          <path d="M106 18.5 H108.5 L113 14.5 V27.5 L108.5 23.5 H106Z" fill="#fff" />
          <path d="M115.5 18 C117 20 117 22 115.5 24" fill="none" stroke="#d6e6dc" strokeWidth="1.3" />
          <g fill="none" stroke="#fff" strokeWidth="1.5"><rect x="133.5" y="17.5" width="10" height="5.5" /><path d="M138.5 14 V28" /></g>
        </svg>
        <div className="flex flex-1 flex-col items-center pt-px pl-[9px] text-[12px] leading-[18px]">
          <span>18:55</span><span className="tracking-[.2px]">2015/6/24</span>
        </div>
      </div>
    </div>
  );
}

export default function App() {
  return (
    <div className="relative h-[768px] w-[1366px] overflow-hidden bg-white font-['Open_Sans','Noto_Sans_CJK_SC',sans-serif]">
      <Explorer />
      <Taskbar />
      <Notepad />
    </div>
  );
}
